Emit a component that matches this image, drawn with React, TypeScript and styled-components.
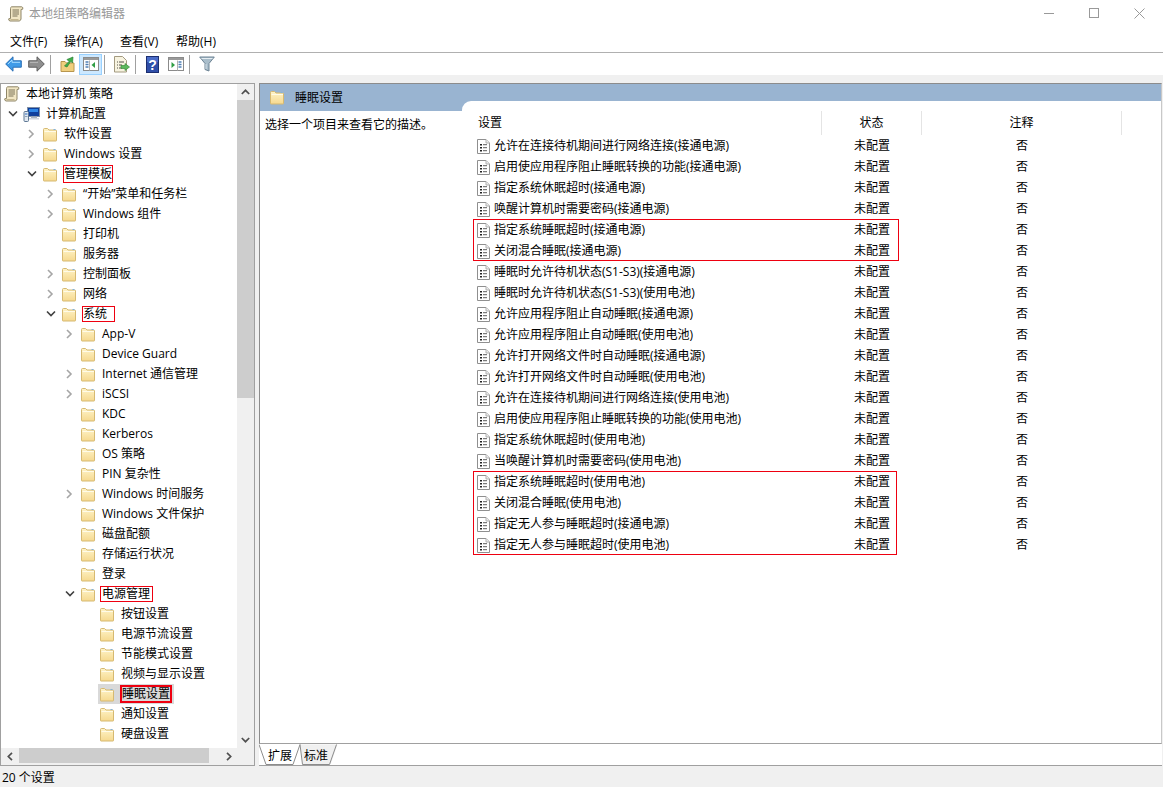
import React from "react";
import styled, { createGlobalStyle } from "styled-components";

const Global = createGlobalStyle`
  html, body { margin: 0; padding: 0; background: #fff; }
  body { font-family: "Open Sans", "Noto Sans CJK SC", sans-serif; font-size: 12px; color: #000; }
  * { box-sizing: border-box; }
`;

const Window = styled.div`
  width: 1163px; height: 787px; display: flex; flex-direction: column; overflow: hidden; background: #fff;
`;
const TitleBar = styled.div`
  height: 30px; display: flex; align-items: flex-start; padding-left: 8px; flex: none;
`;
const TitleIcon = styled.span`display: flex; height: 28px; align-items: center; width: 21px;`;
const TitleText = styled.span`line-height: 28px; color: #999; flex: 1;`;
const WindowControls = styled.div`display: flex; padding-right: 1px;`;
const ControlButton = styled.span`
  width: 45px; height: 26px; display: flex; align-items: center; justify-content: center;
`;
const MenuBar = styled.div`
  height: 22px; flex: none; display: grid; grid-template-columns: 54px 56px 56px 56px; align-items: center; padding-left: 10px;
`;
const Toolbar = styled.div`
  height: 23px; flex: none; display: flex; align-items: center; padding-left: 2px; border-top: 1px solid #b0b0b0;
`;
const ToolButton = styled.span<{ $active?: boolean }>`
  width: 23px; height: 21px; display: flex; align-items: center; justify-content: center;
  background: ${p => (p.$active ? "#cce8ff" : "transparent")};
  border: 1px solid ${p => (p.$active ? "#99d1ff" : "transparent")};
`;
const ToolSep = styled.span`width: 1px; height: 19px; background: #a0a0a0; margin: 0 5px 0 2px;`;
const Strip = styled.div`height: 8px; flex: none; background: #f0f0f0;`;
const Main = styled.div`
  flex: 1; min-height: 0; display: flex; gap: 4px; background: #f0f0f0; padding-right: 1px;
`;
const TreePane = styled.div`
  width: 255px; flex: none; border: 1px solid #a0a0a0; background: #fff;
  display: grid; grid-template-columns: 236px 17px; grid-template-rows: 664px 17px;
`;
const TreeArea = styled.div`overflow: hidden; background: #fff;`;
const TreeRow = styled.div<{ $level: number }>`
  height: 20px; display: flex; align-items: center; padding-left: ${p => 4 + p.$level * 19}px;
`;
const Twisty = styled.span`width: 19px; flex: none; display: flex; align-items: center; padding-left: 3px;`;
const TreeItem = styled.span<{ $selected?: boolean }>`
  display: inline-flex; align-items: center; height: 20px; padding: 0 2px 0 1px; margin-left: -2px;
  background: ${p => (p.$selected ? "#d9d9d9" : "transparent")};
`;
const TreeLabel = styled.span<{ $mark?: boolean; $strong?: boolean; $extra?: number; $lead?: number; $h?: number }>`
  margin-left: ${p => 5 - (p.$lead ?? 0)}px; height: ${p => p.$h ?? 18}px; white-space: pre;
  line-height: ${p => (p.$h ?? 18) - (p.$strong ? 4 : 2)}px;
  border: ${p => (p.$strong ? 2 : 1)}px solid ${p => (p.$mark ? "#ee0010" : "transparent")};
  padding-left: ${p => p.$lead ?? 0}px;
  padding-right: ${p => p.$extra ?? 0}px;
`;
const VScroll = styled.div`
  background: #f0f0f0; display: flex; flex-direction: column; justify-content: space-between;
`;
const VThumb = styled.div`width: 17px; height: 298px; background: #cdcdcd;`;
const ScrollTop = styled.div`display: flex; flex-direction: column;`;
const ArrowBox = styled.span<{ $h?: number }>`
  width: 17px; height: ${p => p.$h ?? 17}px; flex: none; display: flex; align-items: center; justify-content: center;
`;
const HScroll = styled.div`background: #f0f0f0; display: flex; align-items: flex-start; justify-content: space-between;`;
const HThumb = styled.div`width: 190px; height: 15px; background: #cdcdcd; margin-right: 9px; margin-left: 1px;`;
const HTrack = styled.div`display: flex; flex: 1;`;
const Corner = styled.div`background: #f0f0f0;`;

const RightColumn = styled.div`flex: 1; min-width: 0; display: flex; flex-direction: column; background: #fff;`;
const DetailPane = styled.div`
  height: 661px; flex: none; border: 1px solid #8c8c8c; border-right-color: #c8c8c8; border-bottom-color: #a0a0a0;
  display: flex; background: #fff;
`;
const DescColumn = styled.div`width: 202px; flex: none; display: flex; flex-direction: column;`;
const Banner = styled.div`
  height: 27px; flex: none; background: #99b4d1; display: flex; align-items: center;
  padding: 0 0 1px 9px; gap: 10px;
`;
const Desc = styled.div`padding: 4px 0 0 5px;`;
const ListColumn = styled.div`
  flex: 1; min-width: 0; padding-top: 17px;
  background: linear-gradient(#99b4d1 27px, #fff 27px);
`;
const ListBody = styled.div`background: #fff; border-top-left-radius: 9px; padding-top: 10px; height: 100%;`;
const HeaderRow = styled.div`
  height: 24px; display: grid; grid-template-columns: 360px 100px 200px 40px;
`;
const HeaderCell = styled.div<{ $center?: boolean; $plain?: boolean }>`
  line-height: 23px; padding-left: ${p => (p.$center ? 0 : 16)}px; text-align: ${p => (p.$center ? "center" : "left")};
  border-right: ${p => (p.$plain ? "none" : "1px solid #e4e4e4")};
`;
const Group = styled.div<{ $width: number }>`
  position: relative;
  &::after {
    content: ""; position: absolute; left: 11px; top: 0; bottom: 0; width: ${p => p.$width}px;
    border: 1px solid #ee0010; pointer-events: none;
  }
`;
const PolicyRow = styled.div`
  height: 21px; padding-bottom: 1px; display: grid; grid-template-columns: 360px 100px 200px; align-items: center;
`;
const PolicyName = styled.div`display: flex; align-items: center; gap: 4px; padding-left: 15px; white-space: nowrap;`;
const Centered = styled.div`text-align: center;`;

const TabStrip = styled.div`
  height: 22px; flex: none; position: relative; display: flex; align-items: center; padding-left: 9px; gap: 12px;
  border-bottom: 1px solid #a0a0a0;
`;
const TabDrawing = styled.svg`position: absolute; left: 0; top: 0;`;
const TabLabel = styled.span`position: relative; line-height: 20px; padding-top: 2px;`;
const StatusBar = styled.div`
  height: 21px; flex: none; background: #f0f0f0; padding: 2px 0 0 2px; line-height: 19px;
`;

const Folder = () => (
  <svg width="16" height="15" viewBox="0 0 16 15">
    <defs>
      <linearGradient id="fg" x1="0" y1="0" x2="0" y2="1">
        <stop offset="0" stopColor="#fef3c8" />
        <stop offset="1" stopColor="#f6d98f" />
      </linearGradient>
    </defs>
    <path d="M1.500 13.500V2.500q0-1 1-1h3l1.500 1.500h6.500q1 0 1 1v9.500q0 .5-.5.5H2q-.5 0-.5-.5z" fill="url(#fg)" stroke="#d6b971" />
    <path d="M2.500 4.500h11.500" stroke="#fffbe8" />
    <rect x="11.500" y="2" width="2" height="1" fill="#7fb2e0" />
  </svg>
);
const ChevronRight = () => (
  <svg width="9" height="10" viewBox="0 0 9 10"><path d="M2 1l4 4-4 4" fill="none" stroke="#a6a6a6" strokeWidth="1.6" /></svg>
);
const ChevronDown = () => (
  <svg width="10" height="8" viewBox="0 0 10 8"><path d="M1 1.500l4 4 4-4" fill="none" stroke="#404040" strokeWidth="1.6" /></svg>
);
const ScrollDoc = () => (
  <svg width="16" height="16" viewBox="0 0 16 16">
    <path d="M3.500.8h10.200q1.800.5 1 2.400l-1.700.3v9.500q-.3 1.700-1.800 2H2q-1.800-.5-1.200-2.300l1.700-.2V2.500q0-1.300 1-1.700z" fill="#f1e6c4" stroke="#8f8668" />
    <path d="M4.500 4h6.500M4.500 6h6.500M4.500 8h6.500M4.500 10h5" stroke="#7a7258" />
    <path d="M2.500 13.500h8" stroke="#c4b68e" />
  </svg>
);
const Computer = () => (
  <svg width="17" height="16" viewBox="0 0 17 16">
    <rect x="4.500" y="1.500" width="12" height="9" fill="#0f3f9c" stroke="#7f8fa6" />
    <rect x="6" y="3" width="9" height="3" fill="#2f86e6" />
    <rect x="8" y="10.500" width="6" height="2" fill="#aab4c0" />
    <rect x="6" y="12" width="10" height="1.500" fill="#d0d6de" />
    <rect x="1" y="5.500" width="4.500" height="10" rx="1" fill="#e2e9f1" stroke="#5f7894" />
    <rect x="2" y="7.500" width="2.500" height="1" fill="#2d6cc0" />
    <rect x="2" y="10" width="2.500" height="1" fill="#8aa0b8" />
  </svg>
);
const PolicyGlyph = styled.svg`flex: none; margin-top: 2px;`;
const PolicyIcon = () => (
  <PolicyGlyph width="13" height="15" viewBox="0 0 13 15">
    <path d="M.5.500h8.500l3.500 3.500v10.500H.5z" fill="#fff" stroke="#8f8f8f" />
    <path d="M9 .5v3.500h3.500" fill="#eee" stroke="#b0b0b0" />
    <path d="M3 5h2v1.500H3zM3 8h2v1.500H3zM3 11h2v1.500H3z" fill="#222" />
    <path d="M6 5.700h4M6 8.700h4M6 11.700h4" stroke="#5c5c5c" />
  </PolicyGlyph>
);
const UpArrow = () => (<svg width="9" height="6" viewBox="0 0 9 6"><path d="M.8 5l3.700-3.700L8.200 5" fill="none" stroke="#505050" strokeWidth="1.7" /></svg>);
const DownArrow = () => (<svg width="9" height="6" viewBox="0 0 9 6"><path d="M.8 1l3.700 3.700L8.200 1" fill="none" stroke="#505050" strokeWidth="1.7" /></svg>);
const LeftArrow = () => (<svg width="6" height="9" viewBox="0 0 6 9"><path d="M5 .8L1.300 4.500 5 8.200" fill="none" stroke="#505050" strokeWidth="1.7" /></svg>);
const RightArrow = () => (<svg width="6" height="9" viewBox="0 0 6 9"><path d="M1 .8l3.700 3.700L1 8.200" fill="none" stroke="#505050" strokeWidth="1.7" /></svg>);

const IconBack = () => (
  <svg width="17" height="16" viewBox="0 0 17 16">
    <path d="M.7 8L8 .8v4h8.300v6.400H8v4z" fill="#3f9be8" stroke="#2a6fb5" />
    <path d="M3 8l4-4v2.300h8" fill="none" stroke="#a8dcff" />
  </svg>
);
const IconForward = () => (
  <svg width="17" height="16" viewBox="0 0 17 16">
    <path d="M16.300 8L9 .8v4H.7v6.400H9v4z" fill="#8f8f8f" stroke="#5e5e5e" />
    <path d="M2 6.300h8" stroke="#bdbdbd" />
  </svg>
);
const IconUp = () => (
  <svg width="15" height="17" viewBox="0 0 15 17">
    <path d="M1 15.500V5.500h4l1.500 1.500h7.500v8.500z" fill="#f0cf7e" stroke="#b8964e" />
    <path d="M4.500 10L9 5.500 7 3.500l6-2.500-.5 6-1.700-1.700L7 11z" fill="#3fae49" stroke="#2b8135" strokeWidth=".7" />
  </svg>
);
const WindowGlyph = ({ pane }: { pane: "tree" | "action" }) => (
  <svg width="16" height="14" viewBox="0 0 16 14">
    <rect x=".5" y=".5" width="15" height="13" fill="#fff" stroke="#8b8b8b" />
    <rect x="1" y="1" width="14" height="2" fill="#9a9a9a" />
    {pane === "tree" ? (
      <>
        <path d="M2.500 5h3M2.500 7.500h3M2.500 10h3" stroke="#4f7fb5" strokeWidth="1.400" />
        <path d="M12 5v6L8.500 8z" fill="#2f9e44" />
      </>
    ) : (
      <>
        <path d="M10.500 5h3M10.500 7.500h3M10.500 10h3" stroke="#4f7fb5" strokeWidth="1.400" />
        <path d="M3.500 5v6L7 8z" fill="#2f9e44" />
      </>
    )}
    <path d={pane === "tree" ? "M6.500 3.500v10" : "M9.500 3.500v10"} stroke="#b0b0b0" />
  </svg>
);
const IconExport = () => (
  <svg width="17" height="17" viewBox="0 0 17 17">
    <path d="M1.500.5h8l4 4v11.500h-12z" fill="#f7f3e0" stroke="#a39a80" />
    <path d="M4 6h1M4 9h1M4 12h1M6 6h5M6 9h3M6 12h3" stroke="#55524a" />
    <path d="M8 9.500h4V7.500l4.500 3.500-4.500 3.500v-2H8z" fill="#5cb85c" stroke="#3b8f3b" strokeWidth=".7" />
  </svg>
);
const IconHelp = () => (
  <svg width="13" height="17" viewBox="0 0 13 17">
    <rect x=".5" y=".5" width="12" height="16" fill="#2f4ea8" stroke="#1b2e70" />
    <rect x="1" y="1" width="11" height="5" fill="#4a6cc8" />
    <text x="6.500" y="13.500" textAnchor="middle" fill="#fff" fontSize="14" fontWeight="700" fontFamily="Liberation Sans, sans-serif">?</text>
  </svg>
);
const IconFilter = () => (
  <svg width="16" height="16" viewBox="0 0 16 16">
    <path d="M.7 1h14.600L10 7.500V15l-4-1.500v-6z" fill="#a9bdca" stroke="#6c8394" />
    <path d="M2.500 2.500h11" stroke="#e6eef3" />
    <path d="M7 8v5" stroke="#d5e0e7" />
  </svg>
);

type Node = { level: number; label: string; twisty?: "open" | "closed"; mark?: boolean; extra?: number; lead?: number; h?: number; strong?: boolean; selected?: boolean };
const tree: Node[] = [
  { level: 1, label: "软件设置", twisty: "closed" },
  { level: 1, label: "Windows 设置", twisty: "closed" },
  { level: 1, label: "管理模板", twisty: "open", mark: true },
  { level: 2, label: "“开始”菜单和任务栏", twisty: "closed" },
  { level: 2, label: "Windows 组件", twisty: "closed" },
  { level: 2, label: "打印机" },
  { level: 2, label: "服务器" },
  { level: 2, label: "控制面板", twisty: "closed" },
  { level: 2, label: "网络", twisty: "closed" },
  { level: 2, label: "系统", twisty: "open", mark: true, extra: 7, h: 16 },
  { level: 3, label: "App-V", twisty: "closed" },
  { level: 3, label: "Device Guard" },
  { level: 3, label: "Internet 通信管理", twisty: "closed" },
  { level: 3, label: "iSCSI", twisty: "closed" },
  { level: 3, label: "KDC" },
  { level: 3, label: "Kerberos" },
  { level: 3, label: "OS 策略" },
  { level: 3, label: "PIN 复杂性" },
  { level: 3, label: "Windows 时间服务", twisty: "closed" },
  { level: 3, label: "Windows 文件保护" },
  { level: 3, label: "磁盘配额" },
  { level: 3, label: "存储运行状况" },
  { level: 3, label: "登录" },
  { level: 3, label: "电源管理", twisty: "open", mark: true, lead: 1, extra: 2, h: 16 },
  { level: 4, label: "按钮设置" },
  { level: 4, label: "电源节流设置" },
  { level: 4, label: "节能模式设置" },
  { level: 4, label: "视频与显示设置" },
  { level: 4, label: "睡眠设置", mark: true, strong: true, selected: true },
  { level: 4, label: "通知设置" },
  { level: 4, label: "硬盘设置" },
];

const groups: { box?: number; items: string[] }[] = [
  { items: [
    "允许在连接待机期间进行网络连接(接通电源)",
    "启用使应用程序阻止睡眠转换的功能(接通电源)",
    "指定系统休眠超时(接通电源)",
    "唤醒计算机时需要密码(接通电源)",
  ] },
  { box: 424, items: ["指定系统睡眠超时(接通电源)", "关闭混合睡眠(接通电源)"] },
  { items: [
    "睡眠时允许待机状态(S1-S3)(接通电源)",
    "睡眠时允许待机状态(S1-S3)(使用电池)",
    "允许应用程序阻止自动睡眠(接通电源)",
    "允许应用程序阻止自动睡眠(使用电池)",
    "允许打开网络文件时自动睡眠(接通电源)",
    "允许打开网络文件时自动睡眠(使用电池)",
    "允许在连接待机期间进行网络连接(使用电池)",
    "启用使应用程序阻止睡眠转换的功能(使用电池)",
    "指定系统休眠超时(使用电池)",
    "当唤醒计算机时需要密码(使用电池)",
  ] },
  { box: 422, items: [
    "指定系统睡眠超时(使用电池)",
    "关闭混合睡眠(使用电池)",
    "指定无人参与睡眠超时(接通电源)",
    "指定无人参与睡眠超时(使用电池)",
  ] },
];

const Policy = ({ name }: { name: string }) => (
  <PolicyRow>
    <PolicyName><PolicyIcon />{name}</PolicyName>
    <Centered>未配置</Centered>
    <Centered>否</Centered>
  </PolicyRow>
);

export default function App() {
  return (
    <Window>
      <Global />
      <TitleBar>
        <TitleIcon><ScrollDoc /></TitleIcon>
        <TitleText>本地组策略编辑器</TitleText>
        <WindowControls>
          <ControlButton><svg width="11" height="11" viewBox="0 0 11 11"><path d="M0 5.500h10" stroke="#999" /></svg></ControlButton>
          <ControlButton><svg width="11" height="11" viewBox="0 0 11 11"><rect x=".5" y=".5" width="9" height="9" fill="none" stroke="#999" /></svg></ControlButton>
          <ControlButton><svg width="11" height="11" viewBox="0 0 11 11"><path d="M.5.500l10 10M10.500.500l-10 10" stroke="#999" /></svg></ControlButton>
        </WindowControls>
      </TitleBar>
      <MenuBar>
        <span>文件(F)</span><span>操作(A)</span><span>查看(V)</span><span>帮助(H)</span>
      </MenuBar>
      <Toolbar>
        <ToolButton><IconBack /></ToolButton>
        <ToolButton><IconForward /></ToolButton>
        <ToolSep />
        <ToolButton><IconUp /></ToolButton>
        <ToolButton $active><WindowGlyph pane="tree" /></ToolButton>
        <ToolSep />
        <ToolButton><IconExport /></ToolButton>
        <ToolSep />
        <ToolButton><IconHelp /></ToolButton>
        <ToolButton><WindowGlyph pane="action" /></ToolButton>
        <ToolSep />
        <ToolButton><IconFilter /></ToolButton>
      </Toolbar>
      <Strip />
      <Main>
        <TreePane>
          <TreeArea>
            <TreeRow $level={0}>
              <TreeItem><ScrollDoc /><TreeLabel>本地计算机 策略</TreeLabel></TreeItem>
            </TreeRow>
            <TreeRow $level={0}>
              <Twisty><ChevronDown /></Twisty>
              <TreeItem><Computer /><TreeLabel>计算机配置</TreeLabel></TreeItem>
            </TreeRow>
            {tree.map(n => (
              <TreeRow key={n.label} $level={n.level}>
                <Twisty>{n.twisty === "open" ? <ChevronDown /> : n.twisty === "closed" ? <ChevronRight /> : null}</Twisty>
                <TreeItem $selected={n.selected}>
                  <Folder />
                  <TreeLabel $mark={n.mark} $strong={n.strong} $extra={n.extra} $lead={n.lead} $h={n.h}>{n.label}</TreeLabel>
                </TreeItem>
              </TreeRow>
            ))}
          </TreeArea>
          <VScroll>
            <ScrollTop>
              <ArrowBox $h={16}><UpArrow /></ArrowBox>
              <VThumb />
            </ScrollTop>
            <ArrowBox><DownArrow /></ArrowBox>
          </VScroll>
          <HScroll>
            <ArrowBox><LeftArrow /></ArrowBox>
            <HTrack><HThumb /></HTrack>
            <ArrowBox><RightArrow /></ArrowBox>
          </HScroll>
          <Corner />
        </TreePane>
        <RightColumn>
          <DetailPane>
            <DescColumn>
              <Banner><Folder /><span>睡眠设置</span></Banner>
              <Desc>选择一个项目来查看它的描述。</Desc>
            </DescColumn>
            <ListColumn>
              <ListBody>
                <HeaderRow>
                  <HeaderCell>设置</HeaderCell>
                  <HeaderCell $center>状态</HeaderCell>
                  <HeaderCell $center>注释</HeaderCell>
                  <HeaderCell $plain />
                </HeaderRow>
                {groups.map(g =>
                  g.box ? (
                    <Group key={g.items[0]} $width={g.box}>
                      {g.items.map(i => <Policy key={i} name={i} />)}
                    </Group>
                  ) : (
                    <React.Fragment key={g.items[0]}>
                      {g.items.map(i => <Policy key={i} name={i} />)}
                    </React.Fragment>
                  )
                )}
              </ListBody>
            </ListColumn>
          </DetailPane>
          <TabStrip>
            <TabDrawing width="90" height="22" viewBox="0 0 90 22">
              <path d="M0 .5l7 20h27l7-20z" fill="#fff" />
              <path d="M41.500 .5h37l-7 20H43.500z" fill="#f0f0f0" />
              <path d="M0 .5l7 20h27l7-20M41 .5l2.500 20h27l7-20" fill="none" stroke="#8c8c8c" />
            </TabDrawing>
            <TabLabel>扩展</TabLabel>
            <TabLabel>标准</TabLabel>
          </TabStrip>
        </RightColumn>
      </Main>
      <StatusBar>20 个设置</StatusBar>
    </Window>
  );
}
